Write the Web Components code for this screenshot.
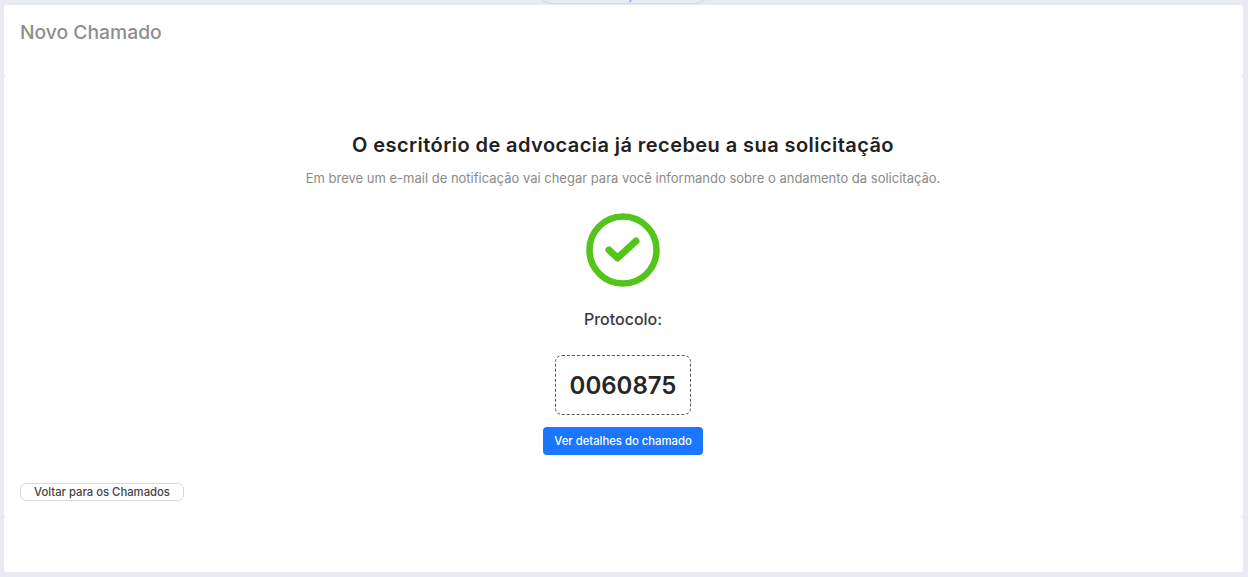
<!DOCTYPE html>
<html lang="pt-BR">
<head>
<meta charset="utf-8">
<title>Novo Chamado</title>
<style>
  html, body { margin: 0; height: 100%; }
  body { background: #e9ebf3; font-family: Inter, "Liberation Sans", sans-serif; overflow: hidden; }
</style>
</head>
<body>
<app-page>
  <top-tab slot="tab">Atenção</top-tab>
  <page-card slot="cards" style="height:71px">
    <page-title>Novo Chamado</page-title>
  </page-card>
  <page-card slot="cards" style="height:441px">
    <success-panel protocol="0060875">
      <span slot="title">O escritório de advocacia já recebeu a sua solicitação</span>
      <span slot="text">Em breve um e-mail de notificação vai chegar para você informando sobre o andamento da solicitação.</span>
      <span slot="label">Protocolo:</span>
      <span slot="action">Ver detalhes do chamado</span>
    </success-panel>
    <back-button>Voltar para os Chamados</back-button>
  </page-card>
  <page-card slot="cards" style="height:55px"></page-card>
</app-page>

<script>
class AppPage extends HTMLElement {
  constructor() {
    super();
    this.attachShadow({ mode: "open" });
    this.shadowRoot.innerHTML = `
      <style>
        :host { display: block; position: relative; height: 577px; box-sizing: border-box; padding: 5px 5px 5px 4px; }
        .cards { display: flex; flex-direction: column; }
      </style>
      <slot name="tab"></slot>
      <div class="cards"><slot name="cards"></slot></div>
    `;
  }
}

class TopTab extends HTMLElement {
  constructor() {
    super();
    this.attachShadow({ mode: "open" });
    this.shadowRoot.innerHTML = `
      <style>
        /* sits over the page, mostly cut off by the top of the window */
        :host {
          position: absolute; left: 541px; top: -3px; width: 165px; height: 7px;
          box-sizing: border-box; display: flex; align-items: flex-end; justify-content: center;
          background: #e9ebf3; border: 1px solid #d6d9e2; border-top: 0;
          border-radius: 0 0 14px 14px / 0 0 6px 6px;
          color: #2f80ed; font-size: 12px; line-height: 15px; overflow: hidden;
        }
        span { transform: translateY(-1px); white-space: nowrap; }
      </style>
      <span><slot></slot></span>
    `;
  }
}

class PageCard extends HTMLElement {
  constructor() {
    super();
    this.attachShadow({ mode: "open" });
    this.shadowRoot.innerHTML = `
      <style>
        :host { display: block; box-sizing: border-box; background: #fff; border-radius: 3px; }
      </style>
      <slot></slot>
    `;
  }
}

class PageTitle extends HTMLElement {
  constructor() {
    super();
    this.attachShadow({ mode: "open" });
    this.shadowRoot.innerHTML = `
      <style>
        :host { display: block; padding: 15px 16px 0; color: #8e8e8e; font-size: 19.300px; font-weight: 500; line-height: 24px; }
      </style>
      <slot></slot>
    `;
  }
}

class SuccessPanel extends HTMLElement {
  constructor() {
    super();
    this.attachShadow({ mode: "open" });
    this.shadowRoot.innerHTML = `
      <style>
        :host { display: flex; flex-direction: column; align-items: center; padding: 55px 1px 0 0; }
        .title { color: #212121; font-size: 20px; font-weight: 600; line-height: 28px; letter-spacing: 0.430px; }
        .text { margin-top: 11px; color: #8a8a8a; font-size: 13px; line-height: 16px; }
        svg { display: block; margin-top: 27px; }
        .label { margin-top: 22px; color: #3a3a3a; font-size: 16px; font-weight: 500; line-height: 20px; }
        .protocol {
          box-sizing: border-box; width: 136px; height: 60px; margin-top: 26px;
          display: flex; align-items: center; justify-content: center;
          border: 1px dashed #555; border-radius: 7px;
          color: #262626; font-size: 24px; font-weight: 600;
        }
        .action {
          box-sizing: border-box; width: 160px; height: 28px; margin-top: 12px;
          display: flex; align-items: center; justify-content: center;
          background: #1a75ff; border-radius: 4px; color: #fff; font-size: 11.300px; font-weight: 500;
        }
      </style>
      <div class="title"><slot name="title"></slot></div>
      <div class="text"><slot name="text"></slot></div>
      <svg width="74" height="74" viewBox="0 0 74 74" fill="none" stroke="#52c41a">
        <circle cx="37" cy="37" r="33.500" stroke-width="6.500"/>
        <path d="M23 37L31.500 45L50 28" stroke-width="7" stroke-linecap="round" stroke-linejoin="round"/>
      </svg>
      <div class="label"><slot name="label"></slot></div>
      <div class="protocol"></div>
      <div class="action"><slot name="action"></slot></div>
    `;
    this.shadowRoot.querySelector(".protocol").textContent = this.getAttribute("protocol");
  }
}

class BackButton extends HTMLElement {
  constructor() {
    super();
    this.attachShadow({ mode: "open" });
    this.shadowRoot.innerHTML = `
      <style>
        :host {
          display: flex; align-items: center; justify-content: center; box-sizing: border-box;
          width: 164px; height: 18px; margin: 28px 0 0 16px;
          border: 1px solid #d9d9d9; border-radius: 6px;
          color: #444; font-size: 11.300px; font-weight: 500;
        }
      </style>
      <slot></slot>
    `;
  }
}

customElements.define("app-page", AppPage);
customElements.define("top-tab", TopTab);
customElements.define("page-card", PageCard);
customElements.define("page-title", PageTitle);
customElements.define("success-panel", SuccessPanel);
customElements.define("back-button", BackButton);
</script>
</body>
</html>
